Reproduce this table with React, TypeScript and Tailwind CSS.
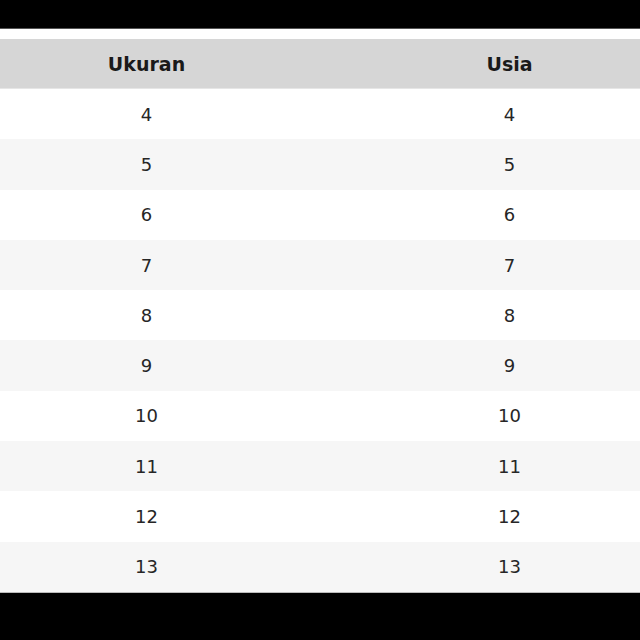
const rows = [4, 5, 6, 7, 8, 9, 10, 11, 12, 13];

export default function App() {
  return (
    <div className="w-[640px] h-[640px] overflow-hidden bg-black flex flex-col font-['DejaVu_Sans',sans-serif]">
      <div className="h-[29px] shrink-0 bg-black border-b border-[#555]" />
      <div className="h-[10px] shrink-0 bg-white" />
      <div className="w-[726px] -ml-[35px] flex flex-col">
        <div className="h-[50px] pt-[2px] flex bg-[#d6d6d6] border-b border-[#e6e6e6] text-[19px] font-bold text-[#1a1a1a]">
          <div className="flex-1 flex items-center justify-center">Ukuran</div>
          <div className="flex-1 flex items-center justify-center">Usia</div>
        </div>
        {rows.map((n, i) => (
          <div
            key={n}
            className={
              "h-[50.3px] flex text-[18px] text-[#262626] " +
              (i % 2 === 0 ? "bg-white" : "bg-[#f6f6f6]")
            }
          >
            <div className="flex-1 flex items-center justify-center">{n}</div>
            <div className="flex-1 flex items-center justify-center">{n}</div>
          </div>
        ))}
      </div>
      <div className="flex-1 bg-black border-t border-[#bbb]" />
    </div>
  );
}
